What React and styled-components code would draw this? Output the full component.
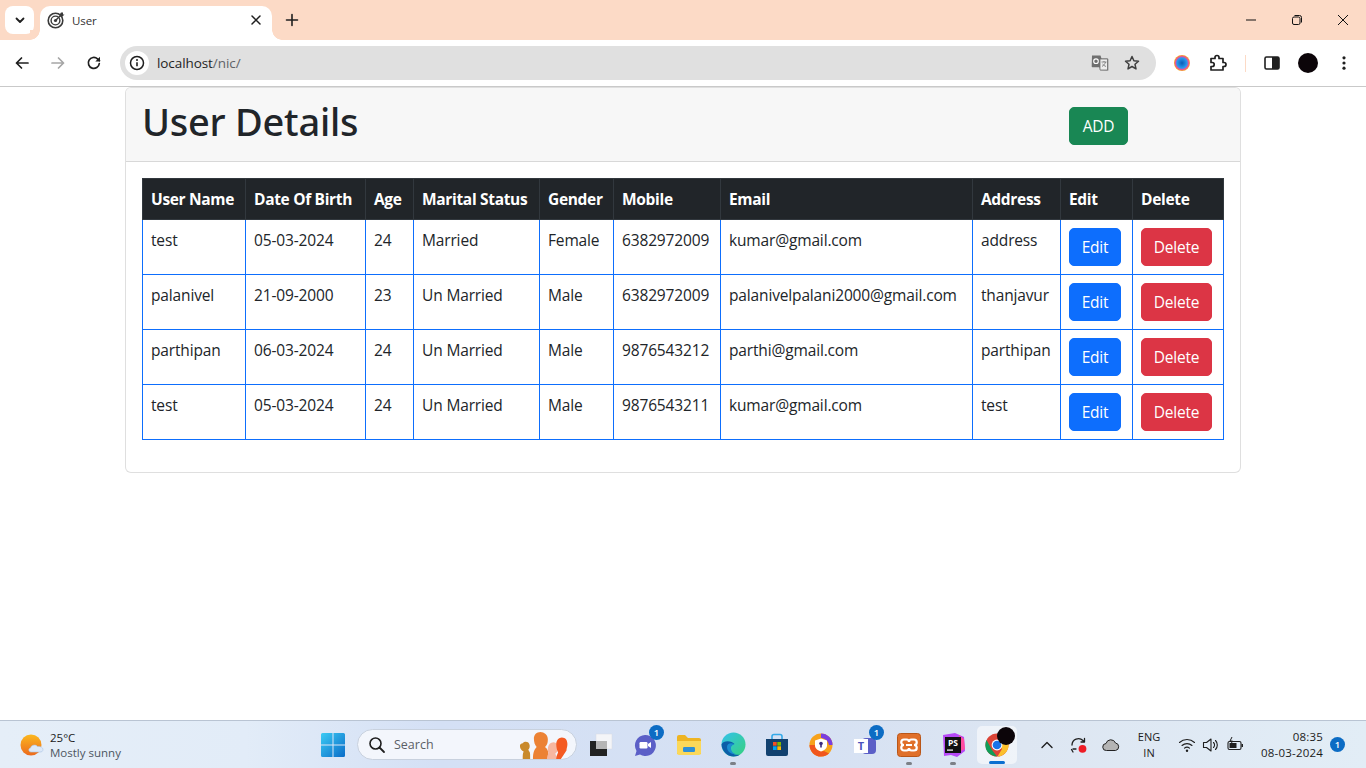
import styled, { createGlobalStyle } from 'styled-components'

const GlobalStyle = createGlobalStyle`
  * { box-sizing: border-box; }
  html, body { margin: 0; padding: 0; height: 100%; }
  body {
    background: #fff;
    color: #212529;
    font-family: "Open Sans", "Noto Sans", "Liberation Sans", sans-serif;
    overflow: hidden;
  }
  svg { display: block; }
`

const Screen = styled.div`
  width: 1366px;
  height: 768px;
  display: flex;
  flex-direction: column;
  overflow: hidden;
`

/* browser chrome */
const TabStrip = styled.div`
  height: 40px;
  flex: none;
  background: #fcdac6;
  display: flex;
  align-items: flex-end;
  padding-left: 5px;
`
const TabSearch = styled.div`
  width: 29px;
  height: 28px;
  margin-bottom: 6px;
  border-radius: 8px;
  background: #fff;
  display: flex;
  align-items: center;
  justify-content: center;
`
const Tab = styled.div`
  position: relative;
  width: 232px;
  height: 34px;
  margin-left: 6px;
  padding: 0 10px 6px 7px;
  background: #fff;
  border-radius: 10px 10px 0 0;
  display: flex;
  align-items: center;
  gap: 7px;
  &::before, &::after {
    content: "";
    position: absolute;
    bottom: 0;
    width: 10px;
    height: 10px;
    background: radial-gradient(circle at var(--cx) 0, #fcdac6 9.5px, #fff 10px);
  }
  &::before { left: -10px; --cx: 0; }
  &::after { right: -10px; --cx: 100%; }
`
const TabTitle = styled.span`
  flex: 1;
  font-size: 11.5px;
  color: #333;
  letter-spacing: -0.1px;
`
const NewTab = styled.div`
  width: 40px;
  height: 34px;
  padding-bottom: 6px;
  display: flex;
  align-items: center;
  justify-content: center;
`
const WindowControls = styled.div`
  margin-left: auto;
  height: 40px;
  display: flex;
  align-items: center;
`
const WindowButton = styled.div`
  width: 46px;
  display: flex;
  justify-content: center;
`
const Toolbar = styled.div`
  height: 47px;
  flex: none;
  background: #fff;
  border-radius: 10px 10px 0 0;
  border-bottom: 1px solid #c9c9c9;
  display: flex;
  align-items: center;
  padding-left: 4px;
`
const NavButton = styled.div`
  width: 36px;
  height: 34px;
  display: flex;
  align-items: center;
  justify-content: center;
`
const AddressBar = styled.div`
  width: 1036px;
  height: 34px;
  margin-left: 8px;
  border-radius: 17px;
  background: #e0e0e0;
  display: flex;
  align-items: center;
  padding: 0 8px 0 5px;
`
const InfoChip = styled.div`
  width: 24px;
  height: 24px;
  border-radius: 50%;
  background: #fff;
  display: flex;
  align-items: center;
  justify-content: center;
`
const Url = styled.span`
  flex: 1;
  margin-left: 8px;
  font-size: 13.5px;
  letter-spacing: -0.08px;
  color: #1f1f1f;
  span { color: #5f6368; }
`
const AddressIcon = styled.div`
  width: 32px;
  display: flex;
  justify-content: center;
`
const ToolbarIcons = styled.div`
  display: flex;
  align-items: center;
  margin-left: 8px;
`
const ToolbarIcon = styled.div`
  width: 36px;
  display: flex;
  justify-content: center;
`
const ToolbarDivider = styled.div`
  width: 1px;
  height: 17px;
  margin: 0 8px 0 9px;
  background: #fcdac6;
`
const Avatar = styled.div`
  width: 20px;
  height: 20px;
  border-radius: 50%;
  background: #0c0509;
`

/* page content */
const Main = styled.main`
  flex: 1;
  min-height: 0;
`
const Container = styled.div`
  width: 1140px;
  margin: 0 auto;
  padding: 0 12px;
`
const Card = styled.section`
  border: 1px solid rgba(0, 0, 0, 0.125);
  border-radius: 6px;
  background: #fff;
`
const CardHeader = styled.header`
  height: 74px;
  padding: 9px 112px 0 16px;
  background: #f7f7f7;
  border-bottom: 1px solid rgba(0, 0, 0, 0.125);
  border-radius: 5px 5px 0 0;
  display: flex;
  align-items: flex-start;
  justify-content: space-between;
`
const Title = styled.h1`
  margin: 0;
  font-family: "Noto Sans", "Open Sans", sans-serif;
  font-size: 38px;
  line-height: 48px;
  font-weight: 500;
  letter-spacing: -0.25px;
`
const Button = styled.button`
  width: ${(p) => p.$width}px;
  height: 38px;
  padding: 0;
  border: 1px solid ${(p) => p.$color};
  border-radius: 5px;
  background: ${(p) => p.$color};
  color: #fff;
  font-family: inherit;
  font-size: 15.5px;
  letter-spacing: -0.2px;
`
const AddButton = styled(Button)`
  margin-top: 10px;
`
const CardBody = styled.div`
  padding: 16px 16px 32px;
`
const Table = styled.table`
  width: 1081px;
  table-layout: fixed;
  border-collapse: collapse;
  font-size: 15.5px;
  line-height: 24px;
`
const HeadCell = styled.th`
  padding: 8px;
  background: #212529;
  border: 1px solid #32383e;
  color: #fff;
  font-weight: 700;
  text-align: left;
  white-space: nowrap;
  letter-spacing: -0.32px;
`
const Cell = styled.td`
  padding: 8px;
  border: 1px solid #0d6efd;
  vertical-align: top;
  white-space: nowrap;
  letter-spacing: -0.15px;
`

/* taskbar */
const Taskbar = styled.footer`
  height: 48px;
  flex: none;
  border-top: 1px solid #b9c4d3;
  background: linear-gradient(90deg, #e5eef8 0%, #e2ecf8 18%, #d4e0f5 32%, #d6e1f3 60%, #dde6f2 75%, #e2edf6 100%);
  display: flex;
  align-items: center;
`
const Weather = styled.div`
  width: 311px;
  padding-left: 20px;
  display: flex;
  align-items: center;
  gap: 6px;
`
const WeatherText = styled.div`
  font-size: 11.5px;
  line-height: 15px;
  color: #1b1b1b;
  small { display: block; font-size: 11.5px; color: #4c5560; }
`
const Pinned = styled.div`
  display: flex;
  align-items: center;
`
const Tile = styled.div`
  position: relative;
  width: 44px;
  height: 40px;
  display: flex;
  align-items: center;
  justify-content: center;
  border-radius: 5px;
  &::after {
    content: "";
    display: ${(p) => (p.$dot ? 'block' : 'none')};
    position: absolute;
    bottom: 0;
    left: 50%;
    transform: translateX(-50%);
    width: 6px;
    height: 3px;
    border-radius: 2px;
    background: #7c8087;
  }
`
const ActiveTile = styled(Tile)`
  width: 40px;
  height: 38px;
  margin-left: 2px;
  background: rgba(255, 255, 255, 0.55);
  &::after {
    display: block;
    width: 16px;
    background: #0a6fd0;
  }
`
const Badge = styled.span`
  position: absolute;
  top: 0;
  right: 3px;
  width: 15px;
  height: 15px;
  border-radius: 50%;
  background: #0c6cc4;
  color: #fff;
  font-size: 9.5px;
  font-weight: 600;
  line-height: 15px;
  text-align: center;
`
const ProfileDot = styled.span`
  position: absolute;
  top: 1px;
  right: 2px;
  width: 18px;
  height: 18px;
  border-radius: 50%;
  background: #0c0509;
`
const SearchBox = styled.div`
  width: 220px;
  height: 31px;
  margin: 0 2px 0 2px;
  padding-left: 10px;
  border-radius: 16px;
  border: 1px solid #c8d1de;
  background: #f3f6fc;
  display: flex;
  align-items: center;
  gap: 8px;
  font-size: 12.5px;
  color: #5b5f66;
  overflow: hidden;
`
const SearchArt = styled.div`
  margin: 0 3px 1px auto;
  height: 29px;
  display: flex;
  align-items: flex-end;
`
const Tray = styled.div`
  margin-left: auto;
  display: flex;
  align-items: center;
  padding-right: 21px;
`
const TrayIcon = styled.div`
  width: ${(p) => p.$width || 32}px;
  display: flex;
  justify-content: center;
`
const Lang = styled.div`
  width: 44px;
  font-size: 11px;
  line-height: 16px;
  text-align: center;
  color: #1b1b1b;
`
const Clock = styled.div`
  width: 73px;
  font-size: 11.5px;
  line-height: 16px;
  letter-spacing: 0.2px;
  text-align: right;
  color: #1b1b1b;
`
const TrayBadge = styled.span`
  width: 15px;
  height: 15px;
  margin-left: 7px;
  border-radius: 50%;
  background: #0c6cc4;
  color: #fff;
  font-size: 9.5px;
  font-weight: 600;
  line-height: 15px;
  text-align: center;
`

/* drawn icons */
const Svg = ({ size = 16, box = 16, children, ...rest }) => (
  <svg width={size} height={size} viewBox={`0 0 ${box} ${box}`} fill="none" {...rest}>
    {children}
  </svg>
)
const Line = ({ d, color = '#1f1f1f', width = 1.6 }) => (
  <path d={d} stroke={color} strokeWidth={width} strokeLinecap="round" strokeLinejoin="round" fill="none" />
)

const TargetIcon = () => (
  <Svg size={18} box={18}>
    <circle cx="8.5" cy="9.5" r="7.3" stroke="#3a3a3a" strokeWidth="1.6" />
    <circle cx="8.5" cy="9.5" r="4.4" stroke="#3a3a3a" strokeWidth="1.4" />
    <circle cx="8.5" cy="9.5" r="1.6" fill="#3a3a3a" />
    <path d="M8.5 9.5 15.5 2.5" stroke="#3a3a3a" strokeWidth="1.4" />
    <path d="M14 1.5h2v2h1.500l-2 2h-2.500v-2.500z" fill="#3a3a3a" />
  </Svg>
)
const WeatherIcon = () => (
  <Svg size={24} box={24}>
    <defs>
      <linearGradient id="sun" x1="0" y1="0" x2="0" y2="1">
        <stop offset="0" stopColor="#fbb81f" />
        <stop offset="1" stopColor="#ec6a1c" />
      </linearGradient>
    </defs>
    <circle cx="11" cy="12" r="10.500" fill="url(#sun)" />
    <path d="M11 19c-2.500 0-3-3.500-.5-4 .5-3 5-4 7-1.500 3-.5 5.500 1 5.500 3s-1.500 2.500-3 2.500z" fill="#dce8f7" stroke="#a9c3e4" strokeWidth=".6" />
  </Svg>
)
const WindowsLogo = () => (
  <Svg size={24} box={24}>
    <defs>
      <linearGradient id="win" x1="0" y1="0" x2="1" y2="1">
        <stop offset="0" stopColor="#3ccbf4" />
        <stop offset="1" stopColor="#0a6cc8" />
      </linearGradient>
    </defs>
    <path d="M0 1.500Q0 0 1.500 0H11.500V11.500H0zM12.500 0H22.500Q24 0 24 1.500V11.500H12.500zM0 12.500H11.500V24H1.500Q0 24 0 22.500zM12.500 12.500H24V22.500Q24 24 22.500 24H12.500z" fill="url(#win)" />
  </Svg>
)
const PeopleArt = () => (
  <svg width="54" height="27" viewBox="0 0 56 29">
    <path d="M0 15c0-2 1.500-3 3-3 2-2 6-2 7 1 1 2 .5 5-1 6l1 2c1 1 1 2 1 8H3c0-4 0-6 1-8-2-1-4-3-4-6z" fill="#c98a2c" />
    <path d="M15 7c0-4 3-7 7-7s8 3 8 8c0 4-1 6-3 8 2 2 4 3 4 13H14c0-8 2-11 4-13-2-2-3-5-3-9z" fill="#ec8234" />
    <path d="M30 18c0-4 3-7 6-7s5 3 5 6-1 5-3 6l2 6H29c0-3 1-5 2-6-1-1-1-3-1-5z" fill="#f7b7a0" />
    <path d="M39 13c0-4 3-7 6-7 4 0 6 3 6 7 0 3-1 5-1 7l-6 9h-5c0-3 1-5 2-7-1-2-2-5-2-9z" fill="#f45a22" />
  </svg>
)
const CubeIcon = () => (
  <Svg size={24} box={24}>
    <rect x="7" y="1" width="16" height="15" fill="#f4f5f8" stroke="#d8dbe2" strokeWidth=".5" />
    <rect x="1" y="8" width="17" height="15" fill="#222" />
    <rect x="7" y="8" width="11" height="8" fill="#b5b5b5" />
  </Svg>
)
const MeetIcon = () => (
  <Svg size={24} box={24}>
    <path d="M12 2a10.500 10.500 0 1 1-5 19.500L2 23l1.500-5A10.500 10.500 0 0 1 12 2z" fill="#5b5fc7" />
    <rect x="6.500" y="9" width="8" height="6.500" rx="1.200" fill="#fff" />
    <path d="M15 11l3-2v6l-3-2z" fill="#fff" />
  </Svg>
)
const FolderIcon = () => (
  <Svg size={26} box={26}>
    <path d="M1 5a2 2 0 0 1 2-2h6l3 3h11a2 2 0 0 1 2 2v14H1z" fill="#eeb422" />
    <path d="M1 9h24v12a2 2 0 0 1-2 2H3a2 2 0 0 1-2-2z" fill="#fbd85a" />
    <rect x="7" y="15" width="12" height="5" rx="1.200" fill="#2e8fd6" />
  </Svg>
)
const EdgeIcon = () => (
  <Svg size={25} box={25}>
    <defs>
      <linearGradient id="edgeA" x1="0" y1="0" x2="1" y2="1">
        <stop offset="0" stopColor="#34c1ed" />
        <stop offset="1" stopColor="#36d27c" />
      </linearGradient>
    </defs>
    <circle cx="12.500" cy="12.500" r="12" fill="url(#edgeA)" />
    <path d="M.5 12.500C1 20 7 24.500 12.500 24.500c3 0 5-1 6.500-2-5 1-9-1-9.500-5-.4-3 1.500-5 4-5.500-2-3-11-4.500-13 .5z" fill="#0c5ea8" />
    <path d="M13.500 12c-2.500.5-4 2.500-3.500 5 .5 3 3 5 6 5-5 1-10-2-10-7 0-3 3-5 7.500-3z" fill="#1a8ed0" />
  </Svg>
)
const StoreIcon = () => (
  <Svg size={24} box={24}>
    <path d="M7 6V3.500A2 2 0 0 1 9 1.500h6a2 2 0 0 1 2 2V6" stroke="#35a9e8" strokeWidth="1.600" />
    <path d="M1 6h22v15a2 2 0 0 1-2 2H3a2 2 0 0 1-2-2z" fill="#12416f" />
    <rect x="8" y="9" width="3.700" height="3.700" fill="#f25022" />
    <rect x="12.300" y="9" width="3.700" height="3.700" fill="#7fba00" />
    <rect x="8" y="13.300" width="3.700" height="3.700" fill="#00a4ef" />
    <rect x="12.300" y="13.300" width="3.700" height="3.700" fill="#ffb900" />
  </Svg>
)
const AvastIcon = () => (
  <Svg size={24} box={24}>
    <circle cx="12" cy="12" r="11.500" fill="#f7a21b" />
    <path d="M12 .5A11.500 11.500 0 0 1 23.500 12H20c-1-5-5-7-8-7z" fill="#7a3fe0" />
    <path d="M.5 12A11.500 11.500 0 0 0 12 23.500c3 0 6-1 8-3L15 18c-4 1-9-1-9-6z" fill="#f0561d" />
    <path d="M12 5.500l6 2v5c0 3-3 5-6 6-3-1-6-3-6-6v-5z" fill="#fff" />
    <circle cx="12" cy="10.500" r="1.800" fill="#3b2a80" />
    <rect x="11.200" y="11" width="1.600" height="3.500" fill="#3b2a80" />
  </Svg>
)
const TeamsIcon = () => (
  <Svg size={24} box={24}>
    <rect x="9" y="5" width="14" height="16" rx="4" fill="#5b5fc7" />
    <rect x="1" y="6" width="14" height="14" fill="#fff" />
    <text x="8" y="17" textAnchor="middle" fontSize="11" fontWeight="700" fontFamily="Open Sans, sans-serif" fill="#4b53bc">T</text>
  </Svg>
)
const XamppIcon = () => (
  <Svg size={24} box={24}>
    <rect x=".5" y=".5" width="23" height="23" rx="3" fill="#e0702a" stroke="#b95618" />
    <path d="M7 6.500h2.500a2.500 2.500 0 0 1 2.500 2.500 2.500 2.500 0 0 1 2.500-2.500H17a2.500 2.500 0 0 1 0 5.500 2.500 2.500 0 0 1 0 5.500h-2.500A2.500 2.500 0 0 1 12 15a2.500 2.500 0 0 1-2.500 2.500H7A2.500 2.500 0 0 1 7 12a2.500 2.500 0 0 1 0-5.500zM9 12h6" stroke="#fff" strokeWidth="2.200" fill="none" />
  </Svg>
)
const PhpStormIcon = () => (
  <Svg size={24} box={24}>
    <path d="M2 2 14 0l9 4 1 14-8 6-6-2-7 1z" fill="#b74af7" />
    <path d="M18 2l5 4 1 10-4 2z" fill="#ff4ea0" />
    <rect x="4" y="4" width="16" height="16" fill="#111" />
    <text x="12" y="13" textAnchor="middle" fontSize="8.500" fontWeight="700" fontFamily="Open Sans, sans-serif" fill="#fff">PS</text>
    <rect x="6" y="16.500" width="6" height="1.200" fill="#fff" />
  </Svg>
)
const ChromeIcon = ({ size = 24 }) => (
  <Svg size={size} box={24}>
    <circle cx="12" cy="12" r="11.500" fill="#db4437" />
    <path d="M1.500 7 7 17l5 6.500A11.500 11.500 0 0 1 1.500 7z" fill="#0f9d58" />
    <path d="M12 7h10.500a11.500 11.500 0 0 1-10 16.500L17 16z" fill="#fbc02d" />
    <circle cx="12" cy="12" r="5.400" fill="#fff" />
    <circle cx="12" cy="12" r="4.300" fill="#1a73e8" />
  </Svg>
)

const COLUMNS = [103, 120, 48, 126, 74, 107, 252, 88, 72, 91]
const HEADINGS = ['User Name', 'Date Of Birth', 'Age', 'Marital Status', 'Gender', 'Mobile', 'Email', 'Address', 'Edit', 'Delete']
const USERS = [
  { name: 'test', dob: '05-03-2024', age: 24, marital: 'Married', gender: 'Female', mobile: '6382972009', email: 'kumar@gmail.com', address: 'address' },
  { name: 'palanivel', dob: '21-09-2000', age: 23, marital: 'Un Married', gender: 'Male', mobile: '6382972009', email: 'palanivelpalani2000@gmail.com', address: 'thanjavur' },
  { name: 'parthipan', dob: '06-03-2024', age: 24, marital: 'Un Married', gender: 'Male', mobile: '9876543212', email: 'parthi@gmail.com', address: 'parthipan' },
  { name: 'test', dob: '05-03-2024', age: 24, marital: 'Un Married', gender: 'Male', mobile: '9876543211', email: 'kumar@gmail.com', address: 'test' },
]

function BrowserChrome() {
  return (
    <>
      <TabStrip>
        <TabSearch>
          <Svg size={12} box={12}><Line d="M2.500 4.500 6 8l3.500-3.500" width="1.800" /></Svg>
        </TabSearch>
        <Tab>
          <TargetIcon />
          <TabTitle>User</TabTitle>
          <Svg size={12} box={12}><Line d="M2 2l8 8M10 2l-8 8" width="1.500" /></Svg>
        </Tab>
        <NewTab>
          <Svg size={14} box={14}><Line d="M7 1.500v11M1.500 7h11" width="1.600" /></Svg>
        </NewTab>
        <WindowControls>
          <WindowButton><Svg size={12} box={12}><path d="M1 6h10" stroke="#111" /></Svg></WindowButton>
          <WindowButton>
            <Svg size={12} box={12}>
              <rect x="1.500" y="3" width="7.500" height="7.500" rx="1.500" stroke="#111" />
              <path d="M3.500 1.500h5a2 2 0 0 1 2 2v5" stroke="#111" />
            </Svg>
          </WindowButton>
          <WindowButton><Svg size={12} box={12}><path d="M1 1l10 10M11 1 1 11" stroke="#111" /></Svg></WindowButton>
        </WindowControls>
      </TabStrip>
      <Toolbar>
        <NavButton>
          <Svg size={16} box={16}><Line d="M14 8H2.500M7.500 3l-5 5 5 5" width="1.700" /></Svg>
        </NavButton>
        <NavButton>
          <Svg size={16} box={16}><Line d="M2 8h11.500M8.500 3l5 5-5 5" color="#a6a6a6" width="1.700" /></Svg>
        </NavButton>
        <NavButton>
          <Svg size={16} box={16}>
            <Line d="M13.300 8.500A5.500 5.500 0 1 1 11.500 3.800L13.500 5.700" width="1.700" />
            <path d="M14 1.800V6.500H9.300z" fill="#1f1f1f" />
          </Svg>
        </NavButton>
        <AddressBar>
          <InfoChip>
            <Svg size={16} box={16}>
              <circle cx="8" cy="8" r="6.500" stroke="#1f1f1f" strokeWidth="1.500" />
              <path d="M8 7.200v4" stroke="#1f1f1f" strokeWidth="1.600" />
              <circle cx="8" cy="5" r="1" fill="#1f1f1f" />
            </Svg>
          </InfoChip>
          <Url>localhost<span>/nic/</span></Url>
          <AddressIcon>
            <Svg size={18} box={18}>
              <path d="M1 1.500h8.500l1 3H16.500a.8.8 0 0 1 .8.800V16.500l-8-.2-1-3H1.500a.8.8 0 0 1-.8-.8z" fill="#6f6f6f" />
              <path d="M9 5h7.500v11H9z" fill="#eee" stroke="#6f6f6f" strokeWidth=".8" />
              <circle cx="5" cy="7.200" r="2.300" stroke="#fff" strokeWidth="1.100" />
              <path d="M10.500 8h5M13 7v1M14.500 8c-.5 2-2 3.500-3.500 4.500M11.500 10c1 1.200 2 2 3.500 2.500" stroke="#6f6f6f" strokeWidth=".8" />
            </Svg>
          </AddressIcon>
          <AddressIcon>
            <Svg size={16} box={16}>
              <path d="M8 1.500l1.900 4.300 4.600.5-3.500 3 1 4.600L8 11.500l-4 2.400 1-4.600-3.500-3 4.600-.5z" stroke="#3f3f3f" strokeWidth="1.500" strokeLinejoin="round" />
            </Svg>
          </AddressIcon>
        </AddressBar>
        <ToolbarIcons>
          <ToolbarIcon>
            <Svg size={18} box={18}>
              <defs>
                <radialGradient id="ext" cx=".5" cy=".5" r=".5">
                  <stop offset="0" stopColor="#0a5bb5" />
                  <stop offset=".65" stopColor="#2a9bef" />
                  <stop offset=".8" stopColor="#e24fa0" />
                  <stop offset="1" stopColor="#f7a81e" />
                </radialGradient>
              </defs>
              <circle cx="9" cy="9" r="8" fill="url(#ext)" />
            </Svg>
          </ToolbarIcon>
          <ToolbarIcon>
            <Svg size={18} box={18}>
              <path d="M2 4.500h4V3.500a2 2 0 0 1 4 0v1h4v4h1a2 2 0 0 1 0 4h-1V16H2v-3.500h1.200a2 2 0 0 0 0-4H2z" stroke="#1f1f1f" strokeWidth="1.700" strokeLinejoin="round" />
            </Svg>
          </ToolbarIcon>
          <ToolbarDivider />
          <ToolbarIcon>
            <Svg size={16} box={16}>
              <rect x="1" y="2" width="14" height="12" rx="1.500" stroke="#1f1f1f" strokeWidth="1.600" />
              <rect x="8" y="2" width="7" height="12" fill="#1f1f1f" />
            </Svg>
          </ToolbarIcon>
          <ToolbarIcon><Avatar /></ToolbarIcon>
          <ToolbarIcon>
            <Svg size={16} box={16}>
              <circle cx="8" cy="2.800" r="1.600" fill="#1f1f1f" />
              <circle cx="8" cy="8" r="1.600" fill="#1f1f1f" />
              <circle cx="8" cy="13.200" r="1.600" fill="#1f1f1f" />
            </Svg>
          </ToolbarIcon>
        </ToolbarIcons>
      </Toolbar>
    </>
  )
}

function WindowsTaskbar() {
  return (
    <Taskbar>
      <Weather>
        <WeatherIcon />
        <WeatherText>25°C<small>Mostly sunny</small></WeatherText>
      </Weather>
      <Pinned>
        <Tile><WindowsLogo /></Tile>
        <SearchBox>
          <Svg size={18} box={18}>
            <circle cx="7.500" cy="7.500" r="5.500" stroke="#1f1f1f" strokeWidth="1.600" />
            <path d="M11.500 11.500 16 16" stroke="#1f1f1f" strokeWidth="1.800" strokeLinecap="round" />
          </Svg>
          Search
          <SearchArt><PeopleArt /></SearchArt>
        </SearchBox>
        <Tile><CubeIcon /></Tile>
        <Tile><MeetIcon /><Badge>1</Badge></Tile>
        <Tile><FolderIcon /></Tile>
        <Tile $dot><EdgeIcon /></Tile>
        <Tile><StoreIcon /></Tile>
        <Tile><AvastIcon /></Tile>
        <Tile><TeamsIcon /><Badge>1</Badge></Tile>
        <Tile $dot><XamppIcon /></Tile>
        <Tile $dot><PhpStormIcon /></Tile>
        <ActiveTile>
          <ChromeIcon />
          <ProfileDot />
        </ActiveTile>
      </Pinned>
      <Tray>
        <TrayIcon>
          <Svg size={14} box={14}><Line d="M2 9.500 7 4.500l5 5" width="1.400" /></Svg>
        </TrayIcon>
        <TrayIcon>
          <Svg size={18} box={18}>
            <Line d="M2 9a6.500 6.500 0 0 1 11-4.500l1.500 1.500M14.500 2.500V6H11M1.500 13.500 3 16M3 13h3" width="1.300" />
            <circle cx="12.500" cy="12.800" r="3.900" fill="#ee1c25" />
          </Svg>
        </TrayIcon>
        <TrayIcon>
          <Svg size={18} box={18}>
            <path d="M4.500 14.500a3.500 3.500 0 0 1-.5-7 5 5 0 0 1 9.500-.5 3.800 3.800 0 0 1 0 7.500z" fill="#b4b4b4" stroke="#222" strokeWidth="1" />
          </Svg>
        </TrayIcon>
        <Lang>ENG<br />IN</Lang>
        <TrayIcon $width={31}>
          <Svg size={18} box={18}>
            <Line d="M1.500 6.500a11 11 0 0 1 15 0M4 9.500a7.500 7.500 0 0 1 10 0M6.500 12.200a3.700 3.700 0 0 1 5 0" width="1.100" />
            <circle cx="9" cy="14.800" r="1.200" fill="#1f1f1f" />
          </Svg>
        </TrayIcon>
        <TrayIcon $width={18}>
          <Svg size={18} box={18}>
            <Line d="M1.500 6.500h3L9 3v12l-4.500-3.500h-3zM11.500 6.500a3.500 3.500 0 0 1 0 5M13.500 4.500a6.500 6.500 0 0 1 0 9" width="1.100" />
          </Svg>
        </TrayIcon>
        <TrayIcon $width={30}>
          <Svg size={18} box={18}>
            <rect x="2" y="5.500" width="13" height="8" rx="1.500" stroke="#1f1f1f" strokeWidth="1.100" />
            <rect x="3.500" y="7" width="7" height="5" fill="#1f1f1f" />
            <rect x="15.500" y="8" width="1.500" height="3" fill="#1f1f1f" />
            <path d="M6 1 4 5h2.500L5 8" stroke="#1f1f1f" strokeWidth="1" />
          </Svg>
        </TrayIcon>
        <Clock>08:35<br />08-03-2024</Clock>
        <TrayBadge>1</TrayBadge>
      </Tray>
    </Taskbar>
  )
}

function App() {
  return (
    <Screen>
      <GlobalStyle />
      <BrowserChrome />
      <Main>
        <Container>
          <Card>
            <CardHeader>
              <Title>User Details</Title>
              <AddButton $color="#198754" $width={59}>ADD</AddButton>
            </CardHeader>
            <CardBody>
              <Table>
                <colgroup>
                  {COLUMNS.map((width, index) => <col key={index} width={width} />)}
                </colgroup>
                <thead>
                  <tr>
                    {HEADINGS.map((heading) => <HeadCell key={heading}>{heading}</HeadCell>)}
                  </tr>
                </thead>
                <tbody>
                  {USERS.map((user, index) => (
                    <tr key={index}>
                      <Cell>{user.name}</Cell>
                      <Cell>{user.dob}</Cell>
                      <Cell>{user.age}</Cell>
                      <Cell>{user.marital}</Cell>
                      <Cell>{user.gender}</Cell>
                      <Cell>{user.mobile}</Cell>
                      <Cell>{user.email}</Cell>
                      <Cell>{user.address}</Cell>
                      <Cell><Button $color="#0d6efd" $width={52}>Edit</Button></Cell>
                      <Cell><Button $color="#dc3545" $width={71}>Delete</Button></Cell>
                    </tr>
                  ))}
                </tbody>
              </Table>
            </CardBody>
          </Card>
        </Container>
      </Main>
      <WindowsTaskbar />
    </Screen>
  )
}

export default App
